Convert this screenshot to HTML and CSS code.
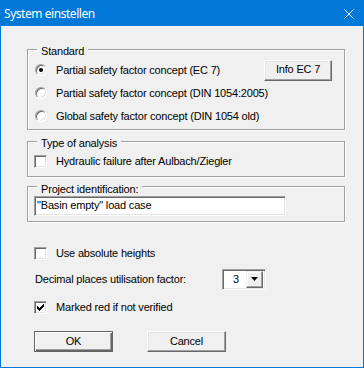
FILE: index.html
```html
<!DOCTYPE html>
<html>
<head>
<meta charset="utf-8">
<link rel="stylesheet" href="styles.css">
</head>
<body>
<div class="window">
  <div class="titlebar">
    <span class="title">System einstellen</span>
    <svg class="close" width="10" height="10" viewBox="0 0 10 10"><path d="M0.5 0.5 L9.5 9.5 M9.5 0.5 L0.5 9.5" stroke="#fff" stroke-width="1" fill="none"/></svg>
  </div>
  <div class="content">
    <div class="group group-standard">
      <div class="group-title">Standard</div>
      <div class="row"><span class="radio checked"></span><span class="label">Partial safety factor concept (EC 7)</span><span class="btn btn-info">Info EC 7</span></div>
      <div class="row"><span class="radio"></span><span class="label">Partial safety factor concept (DIN 1054:2005)</span></div>
      <div class="row"><span class="radio"></span><span class="label">Global safety factor concept (DIN 1054 old)</span></div>
    </div>
    <div class="group group-analysis">
      <div class="group-title">Type of analysis</div>
      <div class="row"><span class="checkbox"></span><span class="label">Hydraulic failure after Aulbach/Ziegler</span></div>
    </div>
    <div class="group group-project">
      <div class="group-title">Project identification:</div>
      <div class="textbox">"Basin empty" load case</div>
    </div>
    <div class="options">
      <div class="row row-abs"><span class="checkbox"></span><span class="label">Use absolute heights</span></div>
      <div class="row row-decimal"><span class="label label-decimal">Decimal places utilisation factor:</span>
        <span class="combo"><span class="combo-value">3</span><span class="combo-arrow"><svg width="7" height="4" viewBox="0 0 7 4"><path d="M0 0 H7 L3.5 4 Z" fill="#000"/></svg></span></span>
      </div>
      <div class="row row-red"><span class="checkbox checked"><svg width="9" height="9" viewBox="0 0 9 9" shape-rendering="crispEdges"><path d="M1 3 H2 V4 H3 V5 H4 V4 H5 V3 H6 V2 H7 V1 H8 V4 H7 V5 H6 V6 H5 V7 H4 V8 H3 V7 H2 V6 H1 Z" fill="#000"/></svg></span><span class="label">Marked red if not verified</span></div>
    </div>
    <div class="buttons">
      <span class="btn btn-default">OK</span>
      <span class="btn btn-cancel">Cancel</span>
    </div>
  </div>
</div>
</body>
</html>
```
FILE: styles.css
```css
html, body {
  margin: 0;
  padding: 0;
  background: #fff;
}
.window {
  width: 364px;
  height: 368px;
  box-sizing: border-box;
  border: 1px solid #0078d7;
  border-top: none;
  background: #f0f0f0;
  font-family: "Liberation Sans", Arial, sans-serif;
  font-size: 11px;
  letter-spacing: -0.18px;
  color: #000;
  display: flex;
  flex-direction: column;
}
.titlebar {
  height: 26px;
  flex: none;
  background: #0078d7;
  color: #fff;
  display: flex;
  align-items: center;
  padding-left: 3px;
}
.title {
  font-family: "Noto Sans", "Open Sans", sans-serif;
  font-size: 12px;
  letter-spacing: -0.45px;
  line-height: 16px;
  margin-top: 1px;
}
.close {
  margin-left: auto;
  margin-right: 9px;
  margin-top: 1px;
}
.content {
  padding: 23px 0 0 26px;
  display: flex;
  flex-direction: column;
}
.group {
  width: 318px;
  box-sizing: border-box;
  border: 1px solid #a0a0a0;
  box-shadow: inset 1px 1px 0 #fff, 1px 1px 0 #fff;
  display: flex;
  flex-direction: column;
  padding-left: 6px;
  padding-right: 12px;
}
.group-title {
  align-self: flex-start;
  margin-top: -7px;
  margin-left: 3px;
  padding: 0 4px;
  line-height: 13px;
  background: #f0f0f0;
}
.row {
  display: flex;
  align-items: center;
  height: 22px;
}
.label {
  line-height: 13px;
  white-space: nowrap;
}
.label-decimal {
  width: 187px;
  flex: none;
}
.group-standard {
  padding-top: 2px;
  padding-bottom: 2px;
  gap: 1px;
}
.group-analysis {
  margin-top: 11px;
  padding-top: 2px;
  padding-bottom: 4px;
}
.group-project {
  margin-top: 9px;
  padding-top: 3px;
  padding-bottom: 5px;
}
.radio {
  width: 12px;
  height: 12px;
  box-sizing: border-box;
  border-radius: 50%;
  border: 1px solid;
  border-color: #a0a0a0 #fff #fff #a0a0a0;
  box-shadow: inset 1px 1px 0 #696969, inset -1px -1px 0 #e3e3e3;
  background: #fff;
  margin-left: 1px;
  margin-right: 9px;
  flex: none;
  display: flex;
  align-items: center;
  justify-content: center;
}
.radio.checked::after {
  content: "";
  width: 4px;
  height: 4px;
  border-radius: 50%;
  background: #000;
}
.checkbox {
  width: 13px;
  height: 13px;
  box-sizing: border-box;
  border: 1px solid;
  border-color: #a0a0a0 #fff #fff #a0a0a0;
  box-shadow: inset 1px 1px 0 #696969, inset -1px -1px 0 #e3e3e3;
  background: #fff;
  margin-right: 9px;
  flex: none;
  display: flex;
  align-items: center;
  justify-content: center;
}
.checkbox svg {
  display: block;
}
.btn {
  display: flex;
  align-items: center;
  justify-content: center;
  box-sizing: border-box;
  height: 21px;
  background: #f0f0f0;
  border: 1px solid;
  border-color: #fff #696969 #696969 #fff;
  box-shadow: inset -1px -1px 0 #a0a0a0, inset 1px 1px 0 #e3e3e3;
  line-height: 13px;
  padding-bottom: 1px;
  flex: none;
}
.btn-info {
  width: 68px;
  margin-left: auto;
}
.textbox {
  width: 252px;
  height: 20px;
  box-sizing: border-box;
  border: 1px solid;
  border-color: #a0a0a0 #fff #fff #a0a0a0;
  box-shadow: inset 1px 1px 0 #696969, inset -1px -1px 0 #e3e3e3;
  background: #fff;
  padding: 0 2px;
  line-height: 16px;
  white-space: nowrap;
}
.options {
  margin-left: 7px;
  display: flex;
  flex-direction: column;
}
.row-abs {
  margin-top: 20px;
}
.row-decimal {
  margin-top: 4px;
  padding-left: 1px;
}
.row-red {
  margin-top: 6px;
}
.combo {
  width: 44px;
  height: 21px;
  box-sizing: border-box;
  border: 1px solid;
  border-color: #a0a0a0 #fff #fff #a0a0a0;
  box-shadow: inset 1px 1px 0 #696969, inset -1px -1px 0 #e3e3e3;
  background: #fff;
  display: flex;
  align-items: center;
  padding: 2px;
}
.combo-value {
  flex: 1;
  padding-left: 8px;
  line-height: 13px;
}
.combo-arrow {
  width: 17px;
  height: 17px;
  box-sizing: border-box;
  background: #f0f0f0;
  border: 1px solid;
  border-color: #f0f0f0 #696969 #696969 #f0f0f0;
  box-shadow: inset -1px -1px 0 #a0a0a0, inset 1px 1px 0 #fff;
  display: flex;
  align-items: center;
  justify-content: center;
}
.combo-arrow svg {
  display: block;
}
.buttons {
  margin-top: 13px;
  margin-left: 7px;
  display: flex;
  gap: 34px;
}
.btn-default {
  width: 79px;
  border-color: #646464;
  box-shadow: inset 1px 1px 0 #fff, inset -1px -1px 0 #646464, inset -2px -2px 0 #a0a0a0;
}
.btn-cancel {
  width: 79px;
}
```
